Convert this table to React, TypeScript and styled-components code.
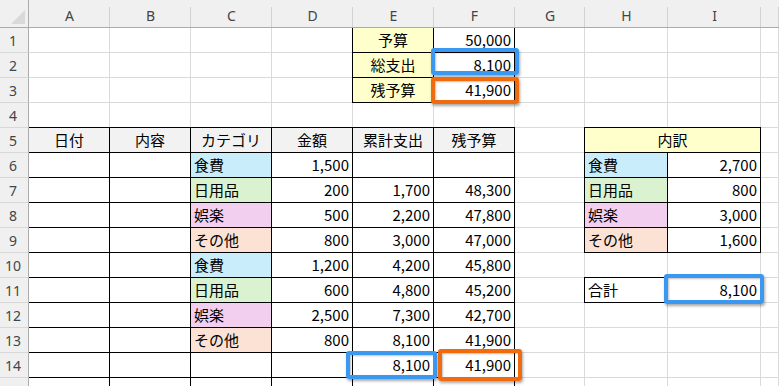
import React from "react";
import styled, { createGlobalStyle } from "styled-components";

const GRID = "#dadada";
const HEAD_BG = "#f0f0f0";
const HEAD_LINE = "#ababab";
const YELLOW = "#ffffcc";
const TITLE_BG = "#f2f2f2";
const BLUE = "#caedfb";
const GREEN = "#daf2d0";
const PINK = "#f2ceef";
const PEACH = "#fbe2d5";
const MARK_BLUE = "#3a98f0";
const MARK_ORANGE = "#f06a0e";

const COLS = ["A", "B", "C", "D", "E", "F", "G", "H", "I", ""];
const ROW_COUNT = 15;
// last row only peeks in at the bottom edge, its number is hidden
const LABELLED_ROWS = 14;

type Align = "left" | "center" | "right";
type Mark = { color: string; t: number; l: number; r: number; b: number };
type CellData = {
  text?: string;
  bg?: string;
  align?: Align;
  boxed?: boolean;
  span?: number;
  mark?: Mark;
};
type RowData = Record<string, CellData>;

const category: Record<string, string> = {
  食費: BLUE,
  日用品: GREEN,
  娯楽: PINK,
  その他: PEACH,
};

const ledger = [
  ["食費", "1,500", "", ""],
  ["日用品", "200", "1,700", "48,300"],
  ["娯楽", "500", "2,200", "47,800"],
  ["その他", "800", "3,000", "47,000"],
  ["食費", "1,200", "4,200", "45,800"],
  ["日用品", "600", "4,800", "45,200"],
  ["娯楽", "2,500", "7,300", "42,700"],
  ["その他", "800", "8,100", "41,900"],
];

const breakdown = [
  ["食費", "2,700"],
  ["日用品", "800"],
  ["娯楽", "3,000"],
  ["その他", "1,600"],
];

const buildRows = (): Record<number, RowData> => {
  const rows: Record<number, RowData> = {};
  for (let r = 1; r <= ROW_COUNT; r++) rows[r] = {};

  rows[1].E = { text: "予算", bg: YELLOW, align: "center", boxed: true };
  rows[1].F = { text: "50,000", align: "right", boxed: true };
  rows[2].E = { text: "総支出", bg: YELLOW, align: "center", boxed: true };
  rows[2].F = {
    text: "8,100",
    align: "right",
    boxed: true,
    mark: { color: MARK_BLUE, t: -5, l: -3, r: -5, b: 2 },
  };
  rows[3].E = { text: "残予算", bg: YELLOW, align: "center", boxed: true };
  rows[3].F = {
    text: "41,900",
    align: "right",
    boxed: true,
    mark: { color: MARK_ORANGE, t: -1, l: -3, r: -5, b: -2 },
  };

  ["日付", "内容", "カテゴリ", "金額", "累計支出", "残予算"].forEach((t, i) => {
    rows[5][COLS[i]] = { text: t, bg: TITLE_BG, align: "center", boxed: true };
  });
  rows[5].H = { text: "内訳", bg: YELLOW, align: "center", boxed: true, span: 2 };

  ledger.forEach(([cat, amount, total, rest], i) => {
    const row = rows[6 + i];
    row.A = { boxed: true };
    row.B = { boxed: true };
    row.C = { text: cat, bg: category[cat], boxed: true };
    row.D = { text: amount, align: "right", boxed: true };
    row.E = { text: total, align: "right", boxed: true };
    row.F = { text: rest, align: "right", boxed: true };
  });

  breakdown.forEach(([cat, value], i) => {
    const row = rows[6 + i];
    row.H = { text: cat, bg: category[cat], boxed: true };
    row.I = { text: value, align: "right", boxed: true };
  });

  rows[11].H = { text: "合計", boxed: true };
  rows[11].I = {
    text: "8,100",
    align: "right",
    boxed: true,
    mark: { color: MARK_BLUE, t: -4, l: -4, r: -4, b: -2 },
  };

  ["A", "B", "C", "D"].forEach((c) => {
    rows[14][c] = { boxed: true };
    rows[15][c] = { boxed: true };
  });
  rows[14].E = {
    text: "8,100",
    align: "right",
    boxed: true,
    mark: { color: MARK_BLUE, t: -2, l: -7, r: -4, b: -2 },
  };
  rows[14].F = {
    text: "41,900",
    align: "right",
    boxed: true,
    mark: { color: MARK_ORANGE, t: -4, l: 4, r: -8, b: -4 },
  };
  rows[15].E = { boxed: true };
  rows[15].F = { boxed: true };

  return rows;
};

const rows = buildRows();

const App = () => {
  return (
    <>
      <GlobalStyle />
      <Sheet>
        <Corner>
          <svg width="14" height="14" viewBox="0 0 14 14">
            <polygon points="14,0 14,14 0,14" fill="#d9d9d9" />
          </svg>
        </Corner>
        {COLS.map((c, i) => (
          <ColHead key={"h" + i}>{c}</ColHead>
        ))}
        {Array.from({ length: ROW_COUNT }, (_, idx) => {
          const r = idx + 1;
          const row = rows[r];
          const out: React.ReactNode[] = [
            <RowHead key={"r" + r}>{r <= LABELLED_ROWS ? r : ""}</RowHead>,
          ];
          let skip = 0;
          COLS.forEach((c, ci) => {
            if (skip > 0) {
              skip--;
              return;
            }
            const cell = row[c] ?? {};
            if (cell.span) skip = cell.span - 1;
            out.push(
              <Cell
                key={r + "-" + ci}
                $bg={cell.bg}
                $align={cell.align ?? "left"}
                $boxed={cell.boxed}
                $span={cell.span}
              >
                {cell.text}
                {cell.mark && (
                  <MarkBox
                    $color={cell.mark.color}
                    $t={cell.mark.t}
                    $l={cell.mark.l}
                    $r={cell.mark.r}
                    $b={cell.mark.b}
                  />
                )}
              </Cell>
            );
          });
          return out;
        })}
      </Sheet>
    </>
  );
};

export default App;

const GlobalStyle = createGlobalStyle`
  * { box-sizing: border-box; }
  html, body { margin: 0; padding: 0; background: #fff; overflow: hidden; }
`;

const Sheet = styled.div`
  display: grid;
  grid-template-columns: 29px 81px 81px 81px 81px 81px 81px 70px 83px 93px 1fr;
  grid-template-rows: 28px repeat(${ROW_COUNT}, 25px);
  width: 779px;
  height: 386px;
  overflow: hidden;
  background: #fff;
`;

const Corner = styled.div`
  position: relative;
  z-index: 1;
  background: ${HEAD_BG};
  border-right: 1px solid ${HEAD_LINE};
  border-bottom: 1px solid ${HEAD_LINE};
  display: flex;
  align-items: flex-end;
  justify-content: flex-end;
  padding: 0 3px 3px 0;
`;

const ColHead = styled.div`
  position: relative;
  z-index: 1;
  background: ${HEAD_BG};
  border-bottom: 1px solid ${HEAD_LINE};
  display: flex;
  align-items: center;
  justify-content: center;
  padding-top: 3px;
  font: 14px "Noto Sans", "Liberation Sans", sans-serif;
  color: #444;

  &::after {
    content: "";
    position: absolute;
    right: 0;
    top: 7px;
    bottom: 0;
    width: 1px;
    background: #d2d2d2;
  }
`;

const RowHead = styled.div`
  position: relative;
  z-index: 1;
  background: ${HEAD_BG};
  border-right: 1px solid ${HEAD_LINE};
  border-bottom: 1px solid #d8d8d8;
  display: flex;
  align-items: center;
  justify-content: center;
  padding: 1px 2px 0 0;
  font: 14px "Noto Sans", "Liberation Sans", sans-serif;
  color: #444;
`;

const justify = { left: "flex-start", center: "center", right: "flex-end" };

const Cell = styled.div<{ $bg?: string; $align: Align; $boxed?: boolean; $span?: number }>`
  position: relative;
  grid-column: span ${(p) => p.$span ?? 1};
  background: ${(p) => p.$bg ?? "#fff"};
  border-right: 1px solid ${(p) => (p.$boxed ? "#000" : GRID)};
  border-bottom: 1px solid ${(p) => (p.$boxed ? "#000" : GRID)};
  box-shadow: ${(p) =>
    p.$boxed ? "-1px -1px 0 #000, -1px 0 0 #000, 0 -1px 0 #000" : "none"};
  display: flex;
  align-items: center;
  justify-content: ${(p) => justify[p.$align]};
  padding: 0 3px 1px 3px;
  font: 15px "Noto Sans CJK JP", "Noto Sans", sans-serif;
  color: #000;
  white-space: nowrap;
`;

const MarkBox = styled.span<{ $color: string; $t: number; $l: number; $r: number; $b: number }>`
  position: absolute;
  z-index: 2;
  top: ${(p) => p.$t}px;
  left: ${(p) => p.$l}px;
  right: ${(p) => p.$r}px;
  bottom: ${(p) => p.$b}px;
  border: 4px solid ${(p) => p.$color};
  border-radius: 3px;
  box-shadow: 1px 2px 3px rgba(0, 0, 0, 0.35), inset 1px 1px 2px rgba(0, 0, 0, 0.25);
  pointer-events: none;
`;
